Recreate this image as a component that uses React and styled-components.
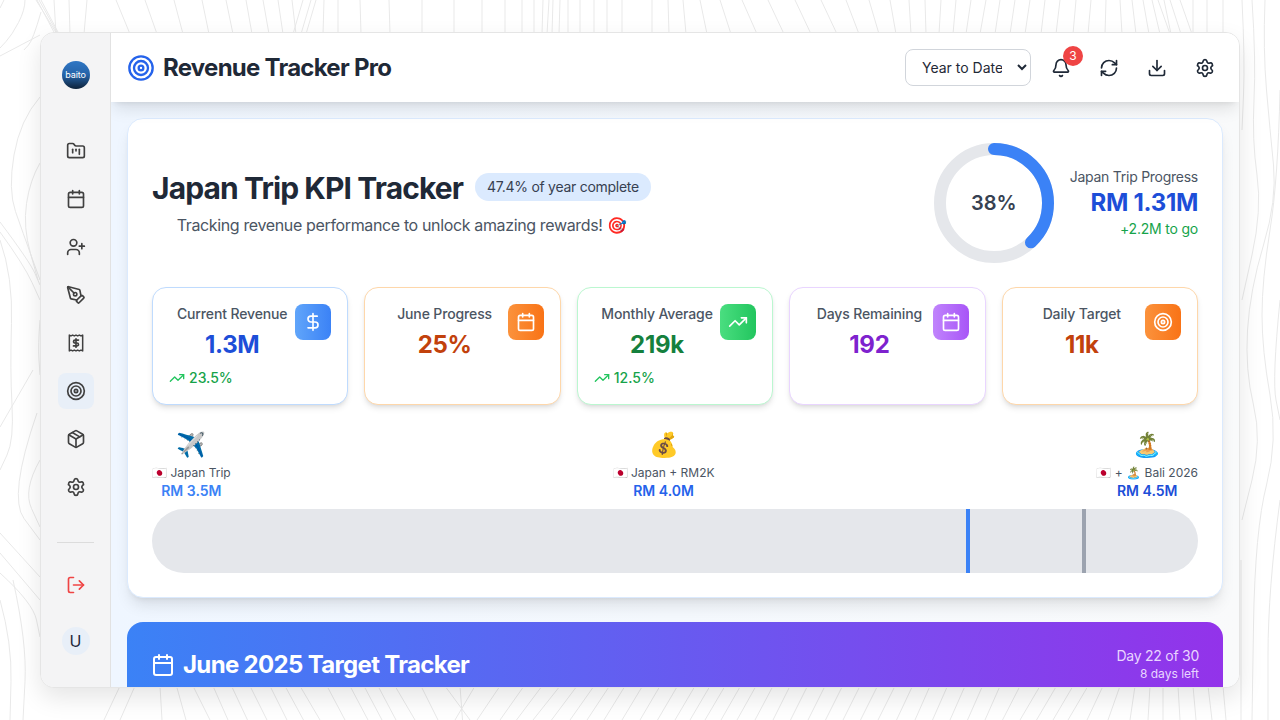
import React from 'react';
import styled, { createGlobalStyle } from 'styled-components';
import {
  FolderKanban, Calendar, UserPlus, PenTool, Target, Package, Settings, LogOut,
  Bell, RefreshCw, Download, DollarSign, TrendingUp,
} from 'lucide-react';

const Global = createGlobalStyle`
  html, body { margin: 0; padding: 0; background: #fff; }
  body { font-family: Inter, "Noto Sans", sans-serif; color: #1f2937; }
  * { box-sizing: border-box; }
`;

const Page = styled.div`
  position: relative;
  width: 1280px;
  height: 720px;
  padding: 32px 40px;
  overflow: hidden;
`;
const Contours = styled.svg`
  position: absolute;
  inset: 0;
  fill: none;
  stroke: #e9e9e9;
  stroke-width: 1;
`;
const Frame = styled.div`
  position: relative;
  display: flex;
  height: 656px;
  background: #fff;
  border: 1px solid #e5e5e5;
  border-radius: 14px;
  overflow: hidden;
  box-shadow: 0 10px 24px rgba(0, 0, 0, 0.1);
`;
const Sidebar = styled.aside`
  flex: 0 0 70px;
  display: flex;
  flex-direction: column;
  align-items: center;
  padding: 28px 0 32px;
  background: #f4f4f5;
  border-right: 1px solid #e2e2e2;
`;
const Logo = styled.div`
  width: 28px;
  height: 28px;
  border-radius: 50%;
  background: linear-gradient(180deg, #2f76c4 0%, #2563a8 50%, #0e2238 100%);
  color: #fff;
  font-size: 9px;
  line-height: 28px;
  text-align: center;
  letter-spacing: -0.1px;
`;
const Nav = styled.nav`
  display: flex;
  flex-direction: column;
  gap: 12px;
  margin-top: 44px;
`;
const SideButton = styled.div`
  width: 36px;
  height: 36px;
  display: flex;
  align-items: center;
  justify-content: center;
  border-radius: 8px;
  color: ${(p) => p.$color || '#404040'};
  background: ${(p) => (p.$active ? '#e8eff8' : 'transparent')};
`;
const SideBottom = styled.div`
  margin-top: auto;
  display: flex;
  flex-direction: column;
  align-items: center;
`;
const Divider = styled.div`
  width: 37px;
  height: 1px;
  background: #dcdcdc;
  margin-bottom: 24px;
`;
const Avatar = styled.div`
  width: 28px;
  height: 28px;
  margin-top: 24px;
  border-radius: 50%;
  background: #e8eff8;
  color: #1e293b;
  font-size: 16px;
  line-height: 28px;
  text-align: center;
`;
const Main = styled.main`
  flex: 1;
  min-width: 0;
  display: flex;
  flex-direction: column;
  overflow: hidden;
`;
const Header = styled.header`
  position: relative;
  z-index: 2;
  flex: 0 0 69px;
  display: flex;
  align-items: center;
  justify-content: space-between;
  padding: 0 16px;
  background: #fff;
  box-shadow: 0 10px 15px -3px rgba(0, 0, 0, 0.1), 0 4px 6px -4px rgba(0, 0, 0, 0.1);
`;
const Brand = styled.div`
  display: flex;
  align-items: center;
  gap: 8px;
  color: #2563eb;
`;
const AppTitle = styled.h1`
  margin: 0;
  padding-top: 1px;
  font-size: 24px;
  line-height: 32px;
  font-weight: 700;
  letter-spacing: -0.74px;
  color: #1f2937;
`;
const Tools = styled.div`
  display: flex;
  align-items: center;
  gap: 12px;
`;
const RangeSelect = styled.select`
  width: 126px;
  height: 37px;
  padding: 0 12px;
  background: #fff;
  border: 1px solid #d1d5db;
  border-radius: 8px;
  font: 400 14px Inter, sans-serif;
  color: #1f2937;
`;
const ToolButton = styled.div`
  position: relative;
  width: 36px;
  height: 36px;
  display: flex;
  align-items: center;
  justify-content: center;
  color: #1f2937;
`;
const Badge = styled.span`
  position: absolute;
  top: -4px;
  right: -4px;
  width: 20px;
  height: 20px;
  border-radius: 50%;
  background: #ef4444;
  color: #fff;
  font-size: 12px;
  line-height: 20px;
  text-align: center;
`;
const Content = styled.div`
  flex: 1;
  display: flex;
  flex-direction: column;
  gap: 24px;
  padding: 16px;
  background: linear-gradient(90deg, #eff6ff 0%, #f9fafb 100%);
  overflow: hidden;
`;
const Panel = styled.section`
  flex: none;
  padding: 24px;
  background: #fff;
  border: 1px solid #dbeafe;
  border-radius: 16px;
  box-shadow: 0 10px 15px -3px rgba(0, 0, 0, 0.1), 0 4px 6px -4px rgba(0, 0, 0, 0.1);
`;
const PanelTop = styled.div`
  display: flex;
  align-items: center;
  justify-content: space-between;
`;
const Intro = styled.div`
  text-align: center;
`;
const TitleRow = styled.div`
  display: flex;
  align-items: center;
  gap: 12px;
  margin-bottom: 6px;
`;
const PanelTitle = styled.h2`
  margin: 0;
  font-size: 30px;
  line-height: 38px;
  font-weight: 700;
  letter-spacing: -0.9px;
  color: #1f2937;
`;
const Pill = styled.span`
  margin-bottom: 2px;
  padding: 4px 12px;
  border-radius: 999px;
  background: #dbeafe;
  color: #374151;
  font-size: 14px;
  line-height: 20px;
  letter-spacing: -0.27px;
`;
const Subtitle = styled.p`
  margin: 0;
  font-size: 16px;
  line-height: 24px;
  letter-spacing: -0.36px;
  color: #4b5563;
`;
const ProgressBlock = styled.div`
  display: flex;
  align-items: center;
  gap: 16px;
`;
const Donut = styled.div`
  position: relative;
  width: 120px;
  height: 120px;
`;
const DonutLabel = styled.div`
  position: absolute;
  inset: 0;
  display: flex;
  align-items: center;
  justify-content: center;
  font-size: 20px;
  font-weight: 600;
  color: #374151;
`;
const ProgressText = styled.div`
  text-align: right;
`;
const ProgressCaption = styled.div`
  font-size: 14px;
  line-height: 20px;
  letter-spacing: -0.26px;
  color: #4b5563;
`;
const ProgressValue = styled.div`
  font-size: 24px;
  line-height: 32px;
  font-weight: 700;
  letter-spacing: -0.3px;
  color: #1d4ed8;
`;
const ProgressNote = styled.div`
  font-size: 14px;
  line-height: 20px;
  letter-spacing: -0.2px;
  color: #16a34a;
`;
const KpiGrid = styled.div`
  display: grid;
  grid-template-columns: repeat(5, 1fr);
  gap: 16px;
  margin-top: 24px;
`;
const KpiCard = styled.div`
  padding: 16px;
  background: #fff;
  border: 1px solid ${(p) => p.$border};
  border-radius: 14px;
  box-shadow: 0 4px 6px -1px rgba(0, 0, 0, 0.1), 0 2px 4px -2px rgba(0, 0, 0, 0.1);
`;
const KpiTop = styled.div`
  display: flex;
  align-items: flex-start;
`;
const KpiText = styled.div`
  flex: 1;
  min-width: 0;
  text-align: center;
`;
const KpiLabel = styled.div`
  font-size: 14px;
  line-height: 20px;
  font-weight: 500;
  letter-spacing: -0.13px;
  color: #4b5563;
  white-space: nowrap;
`;
const KpiValue = styled.div`
  margin-top: 5px;
  font-size: 24px;
  line-height: 32px;
  font-weight: 700;
  letter-spacing: -0.3px;
  color: ${(p) => p.$color};
`;
const KpiIcon = styled.div`
  flex: 0 0 36px;
  height: 36px;
  display: flex;
  align-items: center;
  justify-content: center;
  border-radius: 8px;
  color: #fff;
  background: linear-gradient(90deg, ${(p) => p.$from}, ${(p) => p.$to});
`;
const Trend = styled.div`
  display: flex;
  align-items: center;
  gap: 4px;
  margin-top: 7px;
  font-size: 14px;
  line-height: 20px;
  font-weight: 500;
  color: #16a34a;
`;
const Milestones = styled.div`
  display: flex;
  justify-content: space-between;
  margin-top: 24px;
`;
const Milestone = styled.div`
  text-align: center;
`;
const MilestoneEmoji = styled.div`
  font-size: 24px;
  line-height: 32px;
`;
const MilestoneLabel = styled.div`
  margin-top: 4px;
  font-size: 12px;
  line-height: 16px;
  color: #4b5563;
`;
const MilestoneValue = styled.div`
  font-size: 14px;
  line-height: 20px;
  font-weight: 600;
  color: ${(p) => p.$color};
`;
const Track = styled.div`
  position: relative;
  height: 64px;
  margin-top: 8px;
  border-radius: 32px;
  background: #e5e7eb;
  overflow: hidden;
`;
const Marker = styled.div`
  position: absolute;
  top: 0;
  bottom: 0;
  width: 4px;
  left: ${(p) => p.$left}%;
  background: ${(p) => p.$color};
`;
const Banner = styled.section`
  flex: none;
  display: flex;
  align-items: flex-start;
  justify-content: space-between;
  height: 200px;
  padding: 24px;
  color: #fff;
  border-radius: 16px;
  background: linear-gradient(90deg, #3b82f6, #9333ea);
`;
const BannerTitle = styled.h3`
  display: flex;
  align-items: center;
  gap: 8px;
  margin: 0;
  font-size: 24px;
  line-height: 38px;
  font-weight: 700;
  letter-spacing: -0.67px;
`;
const BannerMeta = styled.div`
  text-align: right;
  color: #e9d5ff;
`;
const BannerDay = styled.div`
  font-size: 14px;
  line-height: 20px;
  letter-spacing: -0.25px;
`;
const BannerLeft = styled.div`
  font-size: 12px;
  line-height: 16px;
`;

const ReceiptIcon = () => (
  <svg width="20" height="20" viewBox="0 0 24 24" fill="none" stroke="currentColor" strokeWidth="2" strokeLinecap="round" strokeLinejoin="round">
    <path d="M4 2.5 L6 3.5 L8 2.5 L10 3.5 L12 2.5 L14 3.5 L16 2.5 L18 3.5 L20 2.5 V21.5 L18 20.5 L16 21.5 L14 20.5 L12 21.5 L10 20.5 L8 21.5 L6 20.5 L4 21.5 Z" strokeWidth="1.8" />
    <path d="M15 8.5 H10.8 a1.75 1.75 0 0 0 0 3.5 h2.4 a1.75 1.75 0 0 1 0 3.5 H9" />
    <path d="M12 7 V17" />
  </svg>
);

const line = (pts) => 'M' + pts.map((p) => p.join(' ')).join(' L');
const smooth = (pts) => {
  if (pts.length < 3) return line(pts);
  let d = `M${pts[0].join(' ')}`;
  for (let i = 1; i < pts.length - 1; i += 1) {
    const mx = (pts[i][0] + pts[i + 1][0]) / 2;
    const my = (pts[i][1] + pts[i + 1][1]) / 2;
    d += ` Q${pts[i].join(' ')} ${mx} ${my}`;
  }
  return `${d} L${pts[pts.length - 1].join(' ')}`;
};
const topPairs = [
  [36, 57], [37, 55], [39, 58], [41, 59], [54, 56], [69, 70], [87, 84], [116, 130], [145, 157], [174, 183], [202, 209], [226, 233], [246, 252], [263, 269], [278, 283],
  [292, 296], [303, 293], [311, 301], [316, 306], [324, 323], [338, 338], [360, 361], [389, 390], [422, 422], [454, 454],
  [482, 482], [505, 505], [522, 522], [534, 534], [543, 542], [549, 547], [553, 552], [560, 559], [568, 568], [580, 580],
  [594, 594], [607, 607], [622, 622], [652, 652], [668, 669], [683, 686], [700, 707], [720, 731], [742, 757], [768, 784],
  [795, 811], [821, 837], [846, 859], [869, 879], [890, 896], [909, 911], [925, 926], [941, 939], [956, 953], [971, 966],
  [986, 980], [1000, 995], [1015, 1010], [1030, 1025], [1045, 1041], [1060, 1056], [1076, 1073], [1091, 1088], [1106, 1105],
  [1120, 1122], [1132, 1136], [1143, 1149], [1152, 1160], [1158, 1170], [1164, 1171], [1170, 1181], [1180, 1192], [1193, 1193],
  [1207, 1207], [1223, 1223],
];
const bottomBase = [
  [120, 104], [135, 120], [160, 162], [193, 210], [213, 228], [250, 267], [270, 287], [300, 320], [327, 345], [350, 368],
  [378, 396], [395, 415], [421, 438], [445, 470], [475, 455], [500, 477], [524, 500], [560, 533], [594, 570], [625, 604],
  [660, 640], [695, 675], [725, 705], [756, 737], [790, 773], [825, 808], [860, 843], [895, 878], [930, 915], [965, 950],
  [1000, 985], [1040, 1020], [1073, 1053], [1088, 1068], [1103, 1087], [1120, 1108], [1135, 1130], [1150, 1148], [1163, 1163],
  [1178, 1180], [1193, 1196], [1208, 1212], [1223, 1226],
];
const bottomPairs = bottomBase.flatMap((pair, i) => {
  const next = bottomBase[i + 1];
  if (!next || next[0] - pair[0] < 28) return [pair];
  return [pair, [(pair[0] + next[0]) / 2, (pair[1] + next[1]) / 2]];
});
const sidePaths = [
  [[40, 35], [0, 56]],
  [[4, 0], [0, 8]],
  [[25, 0], [25, 10], [12, 35], [0, 48]],
  [[41, 12], [33, 40], [24, 50]],
  [[40, 97], [20, 120], [8, 190], [23, 233], [40, 280]],
  [[40, 163], [30, 180], [23, 227], [38, 280]],
  [[0, 240], [13, 277], [10, 370], [14, 440], [0, 470]],
  [[0, 232], [24, 265], [40, 300]],
  [[0, 222], [30, 262], [40, 285]],
  [[33, 370], [0, 427]],
  [[40, 320], [38, 345], [40, 375]],
  [[37, 413], [8, 497], [40, 540]],
  [[40, 460], [23, 490], [40, 527]],
  [[0, 533], [40, 577]],
  [[0, 553], [40, 600]],
  [[0, 573], [33, 603], [40, 637]],
  [[0, 600], [12, 643], [10, 720]],
  [[13, 580], [27, 643], [23, 720]],
  [[1242, 0], [1245, 60], [1242, 130]],
  [[1252, 0], [1256, 60], [1252, 140], [1262, 210], [1242, 300]],
  [[1265, 0], [1263, 50], [1270, 130], [1277, 200], [1250, 290], [1245, 370], [1262, 440], [1242, 520]],
  [[1280, 90], [1278, 180], [1262, 280], [1262, 350], [1278, 440], [1255, 530], [1252, 720]],
  [[1280, 300], [1272, 380], [1280, 420]],
  [[1280, 500], [1268, 590], [1268, 720]],
  [[1241, 560], [1241, 720]],
];
const contourPaths = [
  ...topPairs.map(([a, b]) => line([[a, 0], [b, 34]])),
  ...bottomPairs.map(([a, b]) => line([[a, 686], [b, 720]])),
  ...sidePaths.map(smooth),
];

const kpis = [
  { label: 'Current Revenue', value: '1.3M', color: '#1d4ed8', border: '#bfdbfe', from: '#60a5fa', to: '#3b82f6', Icon: DollarSign, trend: '23.5%' },
  { label: 'June Progress', value: '25%', color: '#c2410c', border: '#fed7aa', from: '#fb923c', to: '#f97316', Icon: Calendar },
  { label: 'Monthly Average', value: '219k', color: '#15803d', border: '#bbf7d0', from: '#4ade80', to: '#22c55e', Icon: TrendingUp, trend: '12.5%' },
  { label: 'Days Remaining', value: '192', color: '#7e22ce', border: '#e9d5ff', from: '#c084fc', to: '#a855f7', Icon: Calendar },
  { label: 'Daily Target', value: '11k', color: '#c2410c', border: '#fed7aa', from: '#fb923c', to: '#f97316', Icon: Target },
];
const navItems = [FolderKanban, Calendar, UserPlus, PenTool, ReceiptIcon, Target, Package, Settings];
const milestones = [
  { emoji: '✈️', label: '🇯🇵 Japan Trip', value: 'RM 3.5M', color: '#3b82f6' },
  { emoji: '💰', label: '🇯🇵 Japan + RM2K', value: 'RM 4.0M', color: '#2563eb' },
  { emoji: '🏝️', label: '🇯🇵 + 🏝️ Bali 2026', value: 'RM 4.5M', color: '#1d4ed8' },
];

export default function App() {
  return (
    <Page>
      <Global />
      <Contours width="1280" height="720" viewBox="0 0 1280 720">
        {contourPaths.map((d) => <path key={d} d={d} />)}
      </Contours>
      <Frame>
        <Sidebar>
          <Logo>baito</Logo>
          <Nav>
            {navItems.map((Icon, i) => (
              <SideButton key={i} $active={i === 5}><Icon size={20} /></SideButton>
            ))}
          </Nav>
          <SideBottom>
            <Divider />
            <SideButton $color="#ef4444"><LogOut size={20} /></SideButton>
            <Avatar>U</Avatar>
          </SideBottom>
        </Sidebar>
        <Main>
          <Header>
            <Brand>
              <Target size={28} />
              <AppTitle>Revenue Tracker Pro</AppTitle>
            </Brand>
            <Tools>
              <RangeSelect defaultValue="ytd">
                <option value="ytd">Year to Date</option>
              </RangeSelect>
              <ToolButton><Bell size={20} /><Badge>3</Badge></ToolButton>
              <ToolButton><RefreshCw size={20} /></ToolButton>
              <ToolButton><Download size={20} /></ToolButton>
              <ToolButton><Settings size={20} /></ToolButton>
            </Tools>
          </Header>
          <Content>
            <Panel>
              <PanelTop>
                <Intro>
                  <TitleRow>
                    <PanelTitle>Japan Trip KPI Tracker</PanelTitle>
                    <Pill>47.4% of year complete</Pill>
                  </TitleRow>
                  <Subtitle>Tracking revenue performance to unlock amazing rewards! 🎯</Subtitle>
                </Intro>
                <ProgressBlock>
                  <Donut>
                    <svg width="120" height="120" viewBox="0 0 120 120" fill="none">
                      <circle cx="60" cy="60" r="54" stroke="#e5e7eb" strokeWidth="12" />
                      <circle cx="60" cy="60" r="54" stroke="#3b82f6" strokeWidth="12" strokeLinecap="round" pathLength="100" strokeDasharray="38 100" transform="rotate(-90 60 60)" />
                    </svg>
                    <DonutLabel>38%</DonutLabel>
                  </Donut>
                  <ProgressText>
                    <ProgressCaption>Japan Trip Progress</ProgressCaption>
                    <ProgressValue>RM 1.31M</ProgressValue>
                    <ProgressNote>+2.2M to go</ProgressNote>
                  </ProgressText>
                </ProgressBlock>
              </PanelTop>
              <KpiGrid>
                {kpis.map(({ label, value, color, border, from, to, Icon, trend }) => (
                  <KpiCard key={label} $border={border}>
                    <KpiTop>
                      <KpiText>
                        <KpiLabel>{label}</KpiLabel>
                        <KpiValue $color={color}>{value}</KpiValue>
                      </KpiText>
                      <KpiIcon $from={from} $to={to}><Icon size={20} /></KpiIcon>
                    </KpiTop>
                    {trend && <Trend><TrendingUp size={16} color="#22c55e" />{trend}</Trend>}
                  </KpiCard>
                ))}
              </KpiGrid>
              <Milestones>
                {milestones.map((m) => (
                  <Milestone key={m.value}>
                    <MilestoneEmoji>{m.emoji}</MilestoneEmoji>
                    <MilestoneLabel>{m.label}</MilestoneLabel>
                    <MilestoneValue $color={m.color}>{m.value}</MilestoneValue>
                  </Milestone>
                ))}
              </Milestones>
              <Track>
                <Marker $left={77.78} $color="#3b82f6" />
                <Marker $left={88.89} $color="#9ca3af" />
              </Track>
            </Panel>
            <Banner>
              <BannerTitle><Calendar size={24} />June 2025 Target Tracker</BannerTitle>
              <BannerMeta>
                <BannerDay>Day 22 of 30</BannerDay>
                <BannerLeft>8 days left</BannerLeft>
              </BannerMeta>
            </Banner>
          </Content>
        </Main>
      </Frame>
    </Page>
  );
}
